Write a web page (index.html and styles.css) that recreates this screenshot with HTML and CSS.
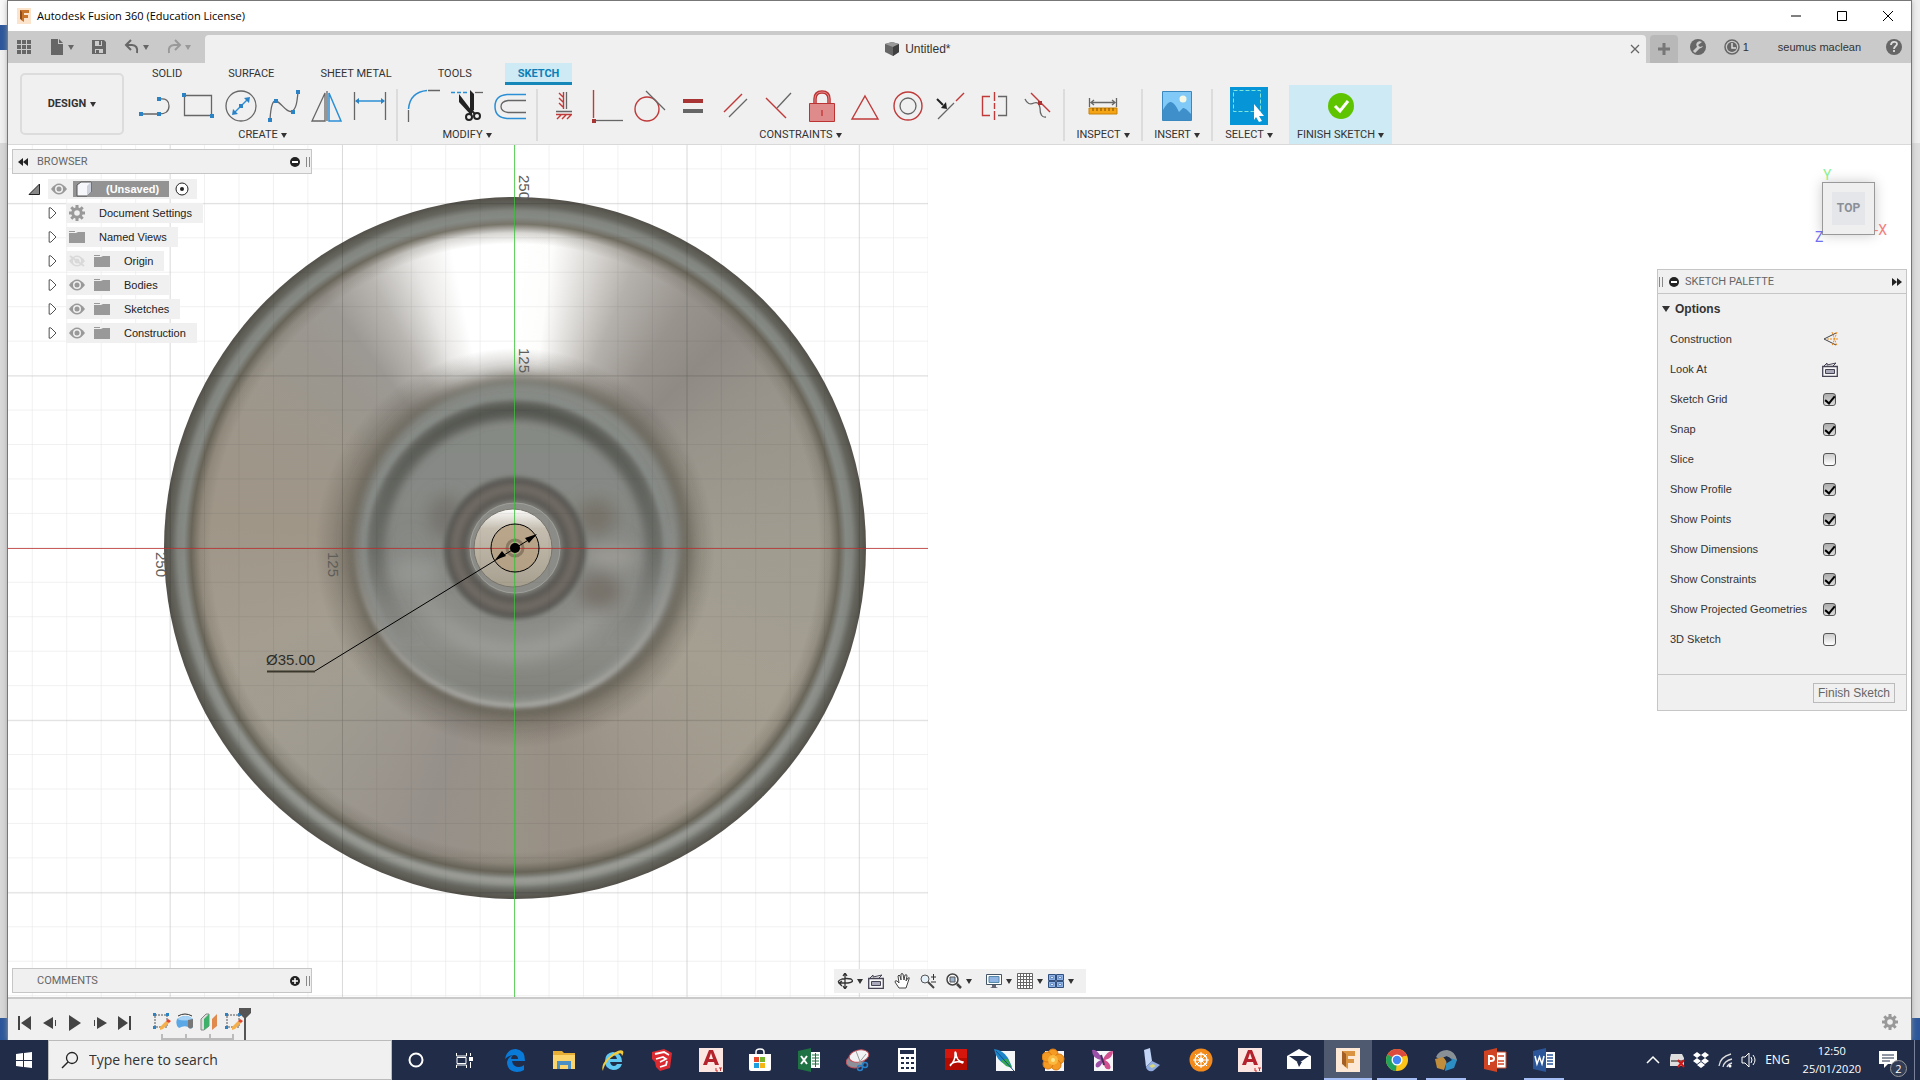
FILE: index.html
```html
<!DOCTYPE html>
<html lang="en">
<head>
<meta charset="utf-8">
<title>Autodesk Fusion 360 (Education License)</title>
<link rel="stylesheet" href="styles.css">
</head>
<body>
<div class="desktop">
<main class="window">
  <header class="titlebar">
    <svg class="app-logo" viewBox="0 0 16 16"><rect x="1" width="14" height="16" fill="#fbe3cc"/><path d="M4 2h9v3H8v2h4v3H8v4l-3-2z" fill="#c8752a"/><path d="M4 2l2 2v8l-2-1z" fill="#8f4d1b"/></svg>
    <h1>Autodesk Fusion 360 (Education License)</h1>
    <div class="win-buttons">
      <button aria-label="Minimise"><svg viewBox="0 0 12 12"><path d="M1 6h10" stroke="#000"/></svg></button>
      <button aria-label="Maximise"><svg viewBox="0 0 12 12"><path d="M1.500 1.500h9v9h-9z" stroke="#000" fill="none"/></svg></button>
      <button aria-label="Close"><svg viewBox="0 0 12 12"><path d="M1 1l10 10M11 1L1 11" stroke="#000"/></svg></button>
    </div>
  </header>

  <div class="docbar">
    <div class="quick">
      <button aria-label="Data panel"><svg class="i16" viewBox="0 0 16 16" fill="#666"><path d="M1 1h4v4H1zM6 1h4v4H6zM11 1h4v4h-4zM1 6h4v4H1zM6 6h4v4H6zM11 6h4v4h-4zM1 11h4v4H1zM6 11h4v4H6zM11 11h4v4h-4z"/></svg></button>
      <button class="has-caret" aria-label="File"><svg class="i16" viewBox="0 0 16 16" fill="#666"><path d="M2 0h7v5h5v11H2zM10 0l4 4h-4z"/></svg><i class="caret dim"></i></button>
      <button aria-label="Save"><svg class="i16" viewBox="0 0 16 16"><path d="M1 1h12l2 2v12H1z" fill="#666"/><path d="M4 2h7v5H4zM4 10h8v4H4z" fill="#ccc"/><path d="M8 2h2v4H8zM5 11h3v3H5z" fill="#666"/></svg></button>
      <button class="has-caret" aria-label="Undo"><svg class="i16" viewBox="0 0 16 16" fill="none" stroke="#666" stroke-width="2"><path d="M7 1L2 6l5 5M2 6h6c4 0 6 3 5 8"/></svg><i class="caret dim"></i></button>
      <button class="has-caret" aria-label="Redo"><svg class="i16" viewBox="0 0 16 16" fill="none" stroke="#999" stroke-width="2"><path d="M9 1l5 5-5 5M14 6H8c-4 0-6 3-5 8"/></svg><i class="caret pale"></i></button>
    </div>
    <div class="doc-tab">
      <span class="doc-name"><svg class="i16" viewBox="0 0 16 16"><path d="M1 3l7-2 7 2v8l-6 4-8-4z" fill="#666"/><path d="M1 3l7-2 7 2-6 3z" fill="#999"/><path d="M9 6l6-3v8l-6 4z" fill="#3f3f3f"/></svg>Untitled*</span>
      <button class="tab-close" aria-label="Close tab"><svg viewBox="0 0 10 10"><path d="M1 1l8 8M9 1L1 9" stroke="#666" stroke-width="1.300"/></svg></button>
    </div>
    <button class="new-tab" aria-label="New tab"><svg class="i16" viewBox="0 0 16 16"><path d="M8 2v12M2 8h12" stroke="#777" stroke-width="3"/></svg></button>
    <div class="account">
      <button aria-label="Extensions"><svg class="i16" viewBox="0 0 16 16"><circle cx="8" cy="8" r="8" fill="#666"/><path d="M4 13l5-5" stroke="#ccc" stroke-width="3" fill="none"/><path d="M12 3a3.500 3.500 0 1 0 1 4l-3 1-2-2z" fill="#ccc"/></svg></button>
      <button class="jobs" aria-label="Job status"><svg class="i16" viewBox="0 0 16 16"><circle cx="8" cy="8" r="7" fill="none" stroke="#666" stroke-width="1.500"/><circle cx="8" cy="8" r="5" fill="#666"/><path d="M8 4v5h4" stroke="#ddd" stroke-width="1.500" fill="none"/></svg>1</button>
      <button class="user">seumus maclean</button>
      <button aria-label="Help"><svg class="i16" viewBox="0 0 16 16"><circle cx="8" cy="8" r="8" fill="#666"/><path d="M5 6c0-4 6-4 6-1 0 2-3 2-3 5M8 11v2" stroke="#ddd" stroke-width="1.800" fill="none"/></svg></button>
    </div>
  </div>

  <div class="ribbon">
    <button class="design">DESIGN<i class="caret"></i></button>
    <div class="ribbon-main">
      <nav class="tabs">
        <a href="#solid">SOLID</a><a href="#surface">SURFACE</a><a href="#sheet">SHEET METAL</a><a href="#tools">TOOLS</a><a href="#sketch" class="active">SKETCH</a>
      </nav>
      <div class="groups">
        <section class="group">
          <div class="tools">
            <button aria-label="Line"><svg viewBox="0 0 32 32"><path d="M2 24h18M20 24q10 0 10-8t-9-7" class="g"/><path class="bf" d="M0 22h4v4H0zM18 22h4v4h-4zM18 7h4v4h-4z"/></svg></button>
            <button aria-label="Rectangle"><svg viewBox="0 0 32 32"><path d="M2.500 5.500h27v20h-27z" class="g"/><path class="bf" d="M0 3h4v4H0zM28 24h4v4h-4z"/></svg></button>
            <button aria-label="Circle"><svg viewBox="0 0 32 32"><circle cx="16" cy="16" r="15" class="g"/><path d="M9 23L23 9" class="b"/><path class="bf" d="M7 25l1-6 5 5zM25 7l-6 1 5 5zM14 14h4v4h-4z"/></svg></button>
            <button aria-label="Spline"><svg viewBox="0 0 32 32"><path d="M2 29C3 15 5 10 8 11c5 1 11 13 16 10 4-2 5-8 6-19" class="g"/><path class="bf" d="M0 28h4v4H0zM6 9h4v4H6zM23 20h4v4h-4zM28 0h4v4h-4z"/></svg></button>
            <button aria-label="Mirror"><svg viewBox="0 0 32 32"><path d="M14 3v28H1zM16 1v30" class="g"/><path d="M18 3v28h12z" class="b"/></svg></button>
            <button aria-label="Dimension"><svg viewBox="0 0 32 32"><path d="M.5 2v28M31.500 2v28" class="g"/><path d="M2 11h28" class="b"/><path class="bf" d="M1 11l4-3v6zM31 11l-4-3v6z"/></svg></button>
          </div>
          <button class="menu">CREATE<i class="caret"></i></button>
        </section>
        <i class="sep"></i>
        <section class="group">
          <div class="tools">
            <button aria-label="Fillet"><svg viewBox="0 0 32 32"><path d="M.5 20v12M20 .5h12" class="g"/><path d="M.5 19Q2 2 19 .5" class="b"/></svg></button>
            <button aria-label="Trim"><svg viewBox="0 0 32 32"><path d="M0 2.500h18" class="b" stroke-dasharray="4 2"/><path d="M24 2.500h8" class="g"/><path d="M8 4l13 17v3h-2L8 12zM19 0l4 4v16l-3 2-1-4z" fill="#222"/><circle cx="18" cy="27" r="3" fill="none" stroke="#222" stroke-width="2"/><circle cx="26" cy="26" r="3" fill="none" stroke="#222" stroke-width="2"/><path d="M20 20l4 4M21 20l-2 5" stroke="#222" stroke-width="2"/></svg></button>
            <button aria-label="Offset"><svg viewBox="0 0 32 32"><path d="M32 4.500H13q-12 1-12 12t12 12h19" class="b" stroke-width="2"/><path d="M32 10.500H14q-7 1-7 6t7 6h18" class="g"/></svg></button>
          </div>
          <button class="menu">MODIFY<i class="caret"></i></button>
        </section>
        <i class="sep"></i>
        <section class="group">
          <div class="tools">
            <button aria-label="Horizontal/Vertical"><svg viewBox="0 0 32 32"><path d="M15.500 2v17M11 3l4 4M11 8l4 4M11 13l4 4M8 24.500h16M9 29l4-4M14 29l4-4M19 29l4-4" class="r"/><path d="M18.500 2v17M8 21.500h16" class="g"/></svg></button>
            <button aria-label="Coincident"><svg viewBox="0 0 32 32"><path d="M2.500 0v28" class="r"/><path d="M5 30.500h27" class="g"/><path class="rf" d="M1 29h4v4H1z"/></svg></button>
            <button aria-label="Tangent"><svg viewBox="0 0 32 32"><circle cx="13" cy="19" r="12" class="r"/><path d="M12 1l19 19" class="g"/></svg></button>
            <button aria-label="Equal"><svg viewBox="0 0 32 32"><path class="rf" d="M6 9h20v4H6z"/><path d="M6 19h20v4H6z" fill="#666"/></svg></button>
            <button aria-label="Parallel"><svg viewBox="0 0 32 32"><path d="M4 22L22 4" class="r"/><path d="M9 27L27 9" class="g"/></svg></button>
            <button aria-label="Perpendicular"><svg viewBox="0 0 32 32"><path d="M3 8l20 20" class="r"/><path d="M14 18L28 3" class="g"/></svg></button>
            <button aria-label="Fix"><svg viewBox="0 0 32 32"><path d="M9 14V9q0-7 7-7t7 7v5" stroke="#b33" stroke-width="3.500" fill="none"/><path d="M9 14V9q0-7 7-7t7 7v5" stroke="#e58c8c" fill="none"/><path d="M3.500 13.500h25v18h-25z" fill="#e08b8b" stroke="#b33"/><path d="M16 20v6" class="r"/></svg></button>
            <button aria-label="Midpoint"><svg viewBox="0 0 32 32"><path d="M16 6l13 23H3z" class="r"/></svg></button>
            <button aria-label="Concentric"><svg viewBox="0 0 32 32"><circle cx="16" cy="16" r="14" class="r"/><circle cx="16" cy="16" r="8" class="g"/></svg></button>
            <button aria-label="Collinear"><svg viewBox="0 0 32 32"><path d="M3 29l16-16" class="g"/><path d="M21 11l8-8" class="r"/><path d="M2 9l6 6" stroke="#222" stroke-width="2"/><path d="M12 19l-6-1 5-6z" fill="#222"/></svg></button>
            <button aria-label="Symmetry"><svg viewBox="0 0 32 32"><path d="M12 6.500H4.500v19H12M16.500 2v9M16.500 13v6M16.500 21v9" class="r"/><path d="M20 6.500h8.500v19H20" class="g"/></svg></button>
            <button aria-label="Curvature"><svg viewBox="0 0 32 32"><path d="M4 9q3 7 9 4 5-2 6 5 0 10 6 9" class="g"/><path d="M10 3l19 19" class="r"/><path class="rf" d="M17 11h4v4h-4z"/></svg></button>
          </div>
          <button class="menu">CONSTRAINTS<i class="caret"></i></button>
        </section>
        <i class="sep"></i>
        <section class="group w76">
          <div class="tools"><button aria-label="Measure"><svg viewBox="0 0 32 32"><path d="M2.500 8v9M29.500 8v9M4 12.500h24M7 10l-3 2.500L7 15M25 10l3 2.500-3 2.500" class="g"/><path d="M2 18h28v6H2z" fill="#f5a414" stroke="#c7810a"/><path d="M6 18v3M10 18v3M14 18v3M18 18v3M22 18v3M26 18v3" stroke="#7a4d00"/></svg></button></div>
          <button class="menu">INSPECT<i class="caret"></i></button>
        </section>
        <i class="sep"></i>
        <section class="group w68">
          <div class="tools"><button aria-label="Insert image"><svg viewBox="0 0 32 32"><path d="M1.500 1.500h29v29h-29z" fill="#81c9f7" stroke="#3a88bd"/><path d="M2 20q5-9 8-8 4 1 8 10l4-4q2-1 8 6v6H2z" fill="#3f8fca"/><circle cx="22" cy="9" r="3.500" fill="#f4f8e4"/></svg></button></div>
          <button class="menu">INSERT<i class="caret"></i></button>
        </section>
        <i class="sep"></i>
        <section class="group w72">
          <div class="tools big"><button aria-label="Select"><svg viewBox="0 0 38 38"><path d="M0 0h38v38H0z" fill="#0696d7"/><path d="M3.500 3.500h27v21h-27z" fill="none" stroke="#7fe6d8" stroke-dasharray="4 2"/><path d="M24 17l10 12h-5l3 5-3 1-3-5-2 3z" fill="#fff"/></svg></button></div>
          <button class="menu">SELECT<i class="caret"></i></button>
        </section>
        <section class="group finish">
          <div class="tools"><button aria-label="Finish sketch"><svg viewBox="0 0 32 32"><circle cx="16" cy="16" r="13" fill="#5fc400"/><path d="M10 16l5 5 8-10" fill="none" stroke="#fff" stroke-width="3"/></svg></button></div>
          <button class="menu">FINISH SKETCH<i class="caret"></i></button>
        </section>
      </div>
    </div>
  </div>

  <div class="canvas">
    <div class="model"></div>
    <svg class="scene" viewBox="0 0 920 852">
      <defs>
        <pattern id="minor" x="23.800" y="23.400" width="34.450" height="34.450" patternUnits="userSpaceOnUse"><path d="M0 0h35M0 0v35" stroke="#000" stroke-opacity=".2" fill="none"/></pattern>
        <pattern id="major" x="161.700" y="58.300" width="172.300" height="172.300" patternUnits="userSpaceOnUse"><path d="M0 0h173M0 0v173" stroke="#000" stroke-opacity=".25" fill="none"/></pattern>
        <linearGradient id="cupLight" x1="0" y1="0" x2="0" y2="1"><stop offset=".4" stop-color="#a5a6a2" stop-opacity="0"/><stop offset="1" stop-color="#a8a8a4"/></linearGradient>
        <linearGradient id="cupDark" x1="0" y1="0" x2="0" y2="1"><stop offset="0" stop-color="#555650"/><stop offset=".5" stop-color="#62645f" stop-opacity=".8"/><stop offset=".85" stop-color="#70716c" stop-opacity="0"/></linearGradient>
        <linearGradient id="cupBase" x1="0" y1="0" x2="0" y2="1"><stop offset="0" stop-color="#878b86"/><stop offset=".5" stop-color="#868884"/><stop offset=".8" stop-color="#8d8d89"/><stop offset="1" stop-color="#81817a"/></linearGradient>
        <linearGradient id="hubTone" x1="0" y1="0" x2="0" y2="1"><stop offset="0" stop-color="#fff"/><stop offset=".25" stop-color="#c5beb0"/><stop offset="1" stop-color="#a79f8e"/></linearGradient>
        <linearGradient id="rimTone" x1="0" y1="0" x2="0" y2="1"><stop offset=".5" stop-color="#9b9b96" stop-opacity="0"/><stop offset="1" stop-color="#a0a09a"/></linearGradient>
        <radialGradient id="collar"><stop offset=".6" stop-color="#8a8a84"/><stop offset=".7" stop-color="#585651"/><stop offset=".83" stop-color="#736d66"/><stop offset=".95" stop-color="#565450"/><stop offset="1" stop-color="#7b7d78"/></radialGradient>
        <filter id="soft2" x="-10%" y="-10%" width="120%" height="120%"><feGaussianBlur stdDeviation="2"/></filter>
        <filter id="soft4" x="-10%" y="-10%" width="120%" height="120%"><feGaussianBlur stdDeviation="4"/></filter>
        <filter id="soft9" x="-40%" y="-40%" width="180%" height="180%"><feGaussianBlur stdDeviation="8"/></filter>
      </defs>
      <g fill="none">
        <circle cx="507" cy="403" r="333" stroke="url(#rimTone)" stroke-width="5" filter="url(#soft2)"/>
        <circle cx="512" cy="401" r="168" fill="#656054" filter="url(#soft9)"/>
        <circle cx="511" cy="399" r="162" fill="url(#cupBase)" filter="url(#soft4)"/>
        <circle cx="507" cy="404" r="139" stroke="url(#cupDark)" stroke-width="18" filter="url(#soft4)"/>
        <circle cx="507" cy="403" r="151" stroke="#8f9591" stroke-opacity=".8" stroke-width="3" filter="url(#soft2)"/>
        <circle cx="507" cy="402" r="158" stroke="url(#cupLight)" stroke-width="6" filter="url(#soft2)"/>
        <circle cx="507" cy="403" r="104" stroke="url(#cupLight)" stroke-opacity=".6" stroke-width="18" filter="url(#soft9)"/>
        <g filter="url(#soft9)"><ellipse cx="588" cy="372" rx="20" ry="18" fill="#77736a"/><ellipse cx="592" cy="446" rx="22" ry="18" fill="#77726a"/><ellipse cx="438" cy="372" rx="18" ry="22" fill="#77756f"/><ellipse cx="602" cy="411" rx="28" ry="8" fill="#a09e98"/><ellipse cx="408" cy="428" rx="24" ry="12" fill="#949793"/></g>
        <circle cx="507" cy="403" r="72" fill="url(#collar)" filter="url(#soft2)"/>
        <circle cx="507" cy="403" r="45" fill="#8b8c87" stroke="#9fa09c"/>
        <circle cx="505" cy="403" r="39" fill="url(#hubTone)" stroke="#77756c"/>
        <circle cx="507" cy="403" r="24" fill="#b69d7d" fill-opacity=".75"/>
        <circle cx="507" cy="403" r="8" stroke="#8a7a64" stroke-width="3"/>
      </g>
      <path fill="url(#minor)" d="M0 0h920v852H0z" opacity=".55"/>
      <path fill="url(#major)" d="M0 0h920v852H0z" opacity=".8"/>
      <path d="M506.500 0v852" stroke="#3cc83c" stroke-opacity=".75"/>
      <path d="M0 403.500h920" stroke="#c03030" stroke-opacity=".75"/>
      <g fill="none" stroke="#000"><circle cx="507" cy="403" r="24"/><path d="M527 391L307 526"/><path d="M307 526.500h-48" stroke="#3a382c" stroke-width="2"/></g>
      <path d="M529 389l-12 4 4 5zM487 415l11-4-4-5z"/>
      <circle cx="507" cy="403" r="5"/>
      <g class="dim-text"><text x="258" y="520">Ø35.00</text></g>
      <g class="axis-text">
        <text transform="translate(511 30) rotate(90)">250</text>
        <text transform="translate(511 203) rotate(90)">125</text>
        <text transform="translate(320 407) rotate(90)">125</text>
        <text transform="translate(148 407) rotate(90)">250</text>
      </g>
    </svg>

    <div class="overlay">
      <div class="left-col">
        <section class="browser">
          <header class="panel-head"><svg class="i12" viewBox="0 0 12 12"><path d="M6 2v8L1 6zM11 2v8L6 6z" fill="#222"/></svg><h2>BROWSER</h2><svg class="i12 end" viewBox="0 0 12 12"><circle cx="6" cy="6" r="5" fill="#222"/><path d="M3 6h6" stroke="#fff" stroke-width="2"/></svg><i class="grip"></i></header>
          <ul class="tree">
            <li class="root"><svg class="i12" viewBox="0 0 12 12"><path d="M1 11.500L11.500 1v10.500z" fill="#888" stroke="#222"/></svg><span class="item"><svg class="eye" viewBox="0 0 16 12"><use href="#eye"/></svg><b><svg class="i16" viewBox="0 0 16 16"><path d="M1 4l4-3h10v10l-4 4H1z" fill="#f6f7fa" stroke="#555"/><path d="M11 5l4-4v10l-4 4z" fill="#cdd1dc"/></svg>(Unsaved)</b><svg class="target" viewBox="0 0 14 14"><circle cx="7" cy="7" r="6" fill="#fff" stroke="#222"/><circle cx="7" cy="7" r="2" fill="#222"/></svg></span></li>
            <li><svg class="i12" viewBox="0 0 12 14"><use href="#twist"/></svg><span class="item"><svg class="i16" viewBox="0 0 16 16"><use href="#gear"/></svg><span>Document Settings</span></span></li>
            <li><svg class="i12" viewBox="0 0 12 14"><use href="#twist"/></svg><span class="item"><svg class="i16" viewBox="0 0 16 16"><use href="#folder"/></svg><span>Named Views</span></span></li>
            <li><svg class="i12" viewBox="0 0 12 14"><use href="#twist"/></svg><span class="item"><svg class="eye off" viewBox="0 0 16 12"><use href="#eye"/><path d="M1 1l14 10" stroke="#999" stroke-width="2"/></svg><svg class="i16" viewBox="0 0 16 16"><use href="#folder"/></svg><span>Origin</span></span></li>
            <li><svg class="i12" viewBox="0 0 12 14"><use href="#twist"/></svg><span class="item"><svg class="eye" viewBox="0 0 16 12"><use href="#eye"/></svg><svg class="i16" viewBox="0 0 16 16"><use href="#folder"/></svg><span>Bodies</span></span></li>
            <li><svg class="i12" viewBox="0 0 12 14"><use href="#twist"/></svg><span class="item"><svg class="eye" viewBox="0 0 16 12"><use href="#eye"/></svg><svg class="i16" viewBox="0 0 16 16"><use href="#folder"/></svg><span>Sketches</span></span></li>
            <li><svg class="i12" viewBox="0 0 12 14"><use href="#twist"/></svg><span class="item"><svg class="eye" viewBox="0 0 16 12"><use href="#eye"/></svg><svg class="i16" viewBox="0 0 16 16"><use href="#folder"/></svg><span>Construction</span></span></li>
          </ul>
        </section>
        <header class="panel-head comments"><h2>COMMENTS</h2><svg class="i12 end" viewBox="0 0 12 12"><circle cx="6" cy="6" r="5" fill="#222"/><path d="M3 6h6M6 3v6" stroke="#fff" stroke-width="1.500"/></svg><i class="grip"></i></header>
      </div>

      <nav class="navbar">
        <button aria-label="Orbit"><svg class="i16" viewBox="0 0 16 16"><path d="M8 1v14M6 3l2-3 2 3M6 13l2 3 2-3M3 11q-4-3 2-5 5-1 9 0 4 3-3 4l-8 0M5 8l-3 2 3 3" fill="none" stroke="#333" stroke-width="1.300"/></svg><i class="caret"></i></button>
        <button aria-label="Look at"><svg class="i16" viewBox="0 0 16 16"><use href="#lookat"/></svg></button>
        <button aria-label="Pan"><svg class="i16" viewBox="0 0 16 16"><path d="M5 15L1 9q0-2 2-1l2 2-1-7q1-2 2 0l1 4V1q1-1 2 0l1 6 1-5q2-1 2 1l-1 5 2-3q2-1 1 1l-3 9z" fill="#fff" stroke="#444"/></svg></button>
        <button aria-label="Zoom"><svg class="i16" viewBox="0 0 16 16"><circle cx="5" cy="6" r="4" fill="#e6f2fa" stroke="#555"/><path d="M8 9l6 6" stroke="#444" stroke-width="2"/><path d="M11 4h5M13.500 1v6M11 9h5" stroke="#333"/></svg></button>
        <button aria-label="Fit"><svg class="i16" viewBox="0 0 16 16"><circle cx="6.500" cy="6.500" r="5.500" fill="#fff" stroke="#444" stroke-width="1.500"/><path d="M4 4h5v5H4z" fill="#9db5cf" stroke="#555"/><path d="M11 11l4 4" stroke="#444" stroke-width="2.500"/></svg><i class="caret"></i></button>
        <button class="gap" aria-label="Display settings"><svg class="i16" viewBox="0 0 16 16"><path d="M1 1.500h14.500v10H.5V1.500z" fill="#fff" stroke="#456"/><path d="M3 3.500h10v6H3z" fill="#8fb3e3" stroke="#58a"/><path d="M6 12h4v2l2 1H4l2-1z" fill="#667"/></svg><i class="caret"></i></button>
        <button aria-label="Grid settings"><svg class="i16" viewBox="0 0 16 16"><path d="M.5 .5h15v15H.5zM3.500 0v16M6.500 0v16M9.500 0v16M12.500 0v16M0 3.500h16M0 6.500h16M0 9.500h16M0 12.500h16" fill="#fff" stroke="#666"/></svg><i class="caret"></i></button>
        <button aria-label="Viewports"><svg class="i16" viewBox="0 0 16 16"><path d="M.5 1.500h7v6h-7zM8.500 1.500h7v6h-7zM.5 8.500h7v6h-7zM8.500 8.500h7v6h-7z" fill="#8db2e8" stroke="#334f7d"/><path d="M2.500 3.500h3v2h-3zM10.500 3.500h3v2h-3zM2.500 10.500h3v2h-3zM10.500 10.500h3v2h-3z" fill="#dce9fa" stroke="#6a8fc4"/></svg><i class="caret"></i></button>
      </nav>

      <div class="right-col">
        <div class="cube"><span class="face">TOP</span><span class="ax y">Y</span><span class="ax x">-X</span><span class="ax z">Z</span></div>
        <section class="palette">
          <header class="panel-head"><i class="grip"></i><svg class="i12" viewBox="0 0 12 12"><circle cx="6" cy="6" r="5" fill="#222"/><path d="M3 6h6" stroke="#fff" stroke-width="2"/></svg><h2>SKETCH PALETTE</h2><svg class="i12 end" viewBox="0 0 12 12"><path d="M1 2v8l5-4zM6 2v8l5-4z" fill="#222"/></svg></header>
          <h3><i class="caret wide"></i>Options</h3>
          <div class="options">
            <div class="opt"><span>Construction</span><button aria-label="Construction"><svg class="i16" viewBox="0 0 16 16"><path d="M14 2L2 8l12 6" fill="none" stroke="#444"/><path d="M5 8h11M10 1l5 14M15 1l-5 14" fill="none" stroke="#f08a1c" stroke-dasharray="2 1"/></svg></button></div>
            <div class="opt"><span>Look At</span><button aria-label="Look At"><svg class="i16" viewBox="0 0 16 16"><use href="#lookat"/></svg></button></div>
            <label class="opt"><span>Sketch Grid</span><input type="checkbox" checked></label>
            <label class="opt"><span>Snap</span><input type="checkbox" checked></label>
            <label class="opt"><span>Slice</span><input type="checkbox"></label>
            <label class="opt"><span>Show Profile</span><input type="checkbox" checked></label>
            <label class="opt"><span>Show Points</span><input type="checkbox" checked></label>
            <label class="opt"><span>Show Dimensions</span><input type="checkbox" checked></label>
            <label class="opt"><span>Show Constraints</span><input type="checkbox" checked></label>
            <label class="opt"><span>Show Projected Geometries</span><input type="checkbox" checked></label>
            <label class="opt"><span>3D Sketch</span><input type="checkbox"></label>
          </div>
          <footer><button>Finish Sketch</button></footer>
        </section>
      </div>
    </div>
  </div>

  <footer class="timeline">
    <div class="player">
      <button aria-label="First"><svg viewBox="0 0 14 16"><path d="M0 1h2v14H0zM13 1v14L3 8z"/></svg></button>
      <button aria-label="Back"><svg viewBox="0 0 14 16"><path d="M10 2v12L0 8zM12 5h1v6h-1z"/></svg></button>
      <button aria-label="Play"><svg viewBox="0 0 14 16"><path d="M1 0v16l12-8z"/></svg></button>
      <button aria-label="Forward"><svg viewBox="0 0 14 16"><path d="M4 2v12l10-6zM1 5h1v6H1z"/></svg></button>
      <button aria-label="Last"><svg viewBox="0 0 14 16"><path d="M11 1h2v14h-2zM0 1v14l10-7z"/></svg></button>
    </div>
    <svg class="features" viewBox="0 0 100 32">
      <g id="sk"><path d="M3 7h12v12H3z" fill="none" stroke="#555" stroke-dasharray="2 1"/><path d="M1 5h3v3H1zM14 5h3v3h-3zM1 18h3v3H1z" fill="#2b83c6"/><path d="M8 19l6-6 3 2-6 6-3 1z" fill="#f5b04c"/><path d="M14 13l2-2 3 2-2 2z" fill="#e2472e"/></g>
      <use href="#sk" x="72"/>
      <path d="M25 11q9-6 16 0v8q-2 3-5 0-4-2-9 1-4-3-2-9z" fill="#5aa9e6"/><path d="M25 11q9-6 16 0-8 3-16 0z" fill="#a5d2f5"/><path d="M26 8q7-4 14 0" fill="none" stroke="#333"/><path d="M36 12l5-1v8q-3 3-5 0z" fill="#777"/>
      <path d="M49 11l5-5h3v12l-5 4h-3z" fill="#ddd" stroke="#888"/><path d="M52 11l5-5v12l-5 4z" fill="#3eb06a"/><path d="M60 11l5-5v12l-5 4z" fill="#e08a4e"/>
      <path d="M10 26v5h71v-5M34 26v5M58 26v5" fill="none" stroke="#bbb" stroke-width="2"/>
      <path d="M87 0h12v5l-5 5v22h-2V10l-5-5z" fill="#555"/>
    </svg>
    <button class="settings" aria-label="Settings"><svg class="i16" viewBox="0 0 16 16"><use href="#gear"/></svg></button>
  </footer>
</main>
</div>

<footer class="taskbar">
  <button class="start" aria-label="Start"><svg class="i16" viewBox="0 0 16 16"><path d="M0 2l7-1v7H0zM8 1l8-1v8H8zM0 9h7v6l-7-1zM8 9h8v7l-8-1z" fill="#fff"/></svg></button>
  <label class="search"><svg viewBox="0 0 18 18"><circle cx="11" cy="7" r="5.500" fill="none" stroke="#222" stroke-width="1.300"/><path d="M7 11l-6 6" stroke="#222" stroke-width="1.500"/></svg><input type="search" placeholder="Type here to search" aria-label="Type here to search"></label>
  <div class="system">
    <button aria-label="Cortana"><svg viewBox="0 0 24 24"><circle cx="12" cy="12" r="6.500" fill="none" stroke="#fff" stroke-width="2"/></svg></button>
    <button aria-label="Task view"><svg viewBox="0 0 24 24" fill="none" stroke="#fff"><path d="M4.500 5v3h10V5M5 9.500h9v6H5zM4.500 20v-3h10v3M18.500 5v3M18.500 14v6"/><path d="M17 9h4v4h-4z" fill="#fff" stroke="none"/></svg></button>
  </div>
  <div class="apps">
    <button aria-label="Edge"><svg viewBox="0 0 24 24"><path d="M2 11Q4 1 13 1q9 1 9 12H9q1 6 7 6 3 0 5-2v5q-3 2-7 2-10-1-10-10 1-5 6-7-2 2-2 4h7q0-4-4-4-5 0-9 4z" fill="#0a7ad8"/></svg></button>
    <button aria-label="File Explorer"><svg viewBox="0 0 24 24"><path d="M1 3h9l2 2h11v16H1z" fill="#e6ae35"/><path d="M1 7h22v14H1z" fill="#fbd46b"/><path d="M5 21v-8h14v8h-3v-4H8v4z" fill="#4a90c4"/></svg></button>
    <button aria-label="Internet Explorer"><svg viewBox="0 0 24 24"><path d="M12 4q9 1 9 10H9q1 4 4 4 2 0 3-2h5q-2 6-9 6-8-1-8-9t8-9M9 11h7q-1-4-4-4-2 0-3 4" fill="#5fc8f3" fill-rule="evenodd"/><path d="M2 23Q-1 17 8 9 18 0 22 3q1 2-1 5 0-4-4-2Q8 9 4 17q-2 4-2 6z" fill="#f2ca3d"/></svg></button>
    <button aria-label="SketchUp"><svg viewBox="0 0 24 24"><path d="M2 4l12-3 8 4-2 15-10 3-4-4-1-5-3-3z" fill="#db2b31"/><path d="M5 6l9-2 5 3M6 11l7-2 3 2-6 3M10 19l6-2 1-4" stroke="#fff" stroke-width="1.800" fill="none"/></svg></button>
    <button aria-label="AutoCAD"><svg viewBox="0 0 24 24"><use href="#acad"/></svg></button>
    <button aria-label="Microsoft Store"><svg viewBox="0 0 24 24"><path d="M1 6h22v15q0 2-2 2H3q-2 0-2-2z" fill="#fff"/><path d="M8 7V4q0-3 4-3t4 3v3" fill="none" stroke="#fff" stroke-width="1.500"/><path d="M6 9h5v5H6z" fill="#e8482c"/><path d="M12 9h5v5h-5z" fill="#73b52b"/><path d="M6 15h5v5H6z" fill="#1e9fe0"/><path d="M12 15h5v5h-5z" fill="#f6b516"/></svg></button>
    <button aria-label="Excel"><svg viewBox="0 0 24 24"><path d="M13 4h10v16H13z" fill="#fff"/><path d="M15 7h7M15 10h7M15 13h7M15 16h7M18.500 5v14" stroke="#1f7244"/><path d="M1 3l13-3v24L1 21z" fill="#1f7244"/><path d="M4 8l6 8M10 8l-6 8" stroke="#fff" stroke-width="2"/></svg></button>
    <button aria-label="Snipping Tool"><svg viewBox="0 0 24 24"><ellipse cx="9" cy="14" rx="9" ry="6" fill="#8d8f99" stroke="#c84c54"/><ellipse cx="13" cy="8" rx="10" ry="6" transform="rotate(-12 13 8)" fill="#f2f2f4" stroke="#c84c54"/><path d="M10 3l5 13M20 6l-8 10" stroke="#999"/><circle cx="14" cy="20" r="2.500" fill="none" stroke="#2882c8" stroke-width="1.500"/><circle cx="19" cy="17" r="2.500" fill="none" stroke="#2882c8" stroke-width="1.500"/></svg></button>
    <button aria-label="Calculator"><svg viewBox="0 0 24 24"><path d="M3 0h18v24H3z" fill="#fff"/><path d="M5 2h14v4H5zM6 9h3v2H6zM11 9h3v2h-3zM16 9h3v2h-3zM6 14h3v2H6zM11 14h3v2h-3zM16 14h3v2h-3zM6 19h3v2H6zM11 19h3v2h-3zM16 19h3v2h-3z" fill="#222d4b"/></svg></button>
    <button aria-label="Acrobat"><svg viewBox="0 0 24 24"><path d="M1 1h22v21H1z" fill="#b30b00"/><path d="M1 1h22v9H1z" fill="#d5160c"/><path d="M6 18Q12 12 11 5q0-2 1 0 0 8 7 9 0 2-3 0-6-1-10 3" fill="none" stroke="#fff" stroke-width="1.500"/></svg></button>
    <button aria-label="Paint tool"><svg viewBox="0 0 24 24"><path d="M3 3h19v20H3z" fill="#f5f6f8"/><path d="M1 1q9 1 14 9l4 9-6-2Q3 12 1 1z" fill="#1d85c9"/><path d="M8 13q3-3 7-2l4 9-6-2z" fill="#36a853"/><path d="M3 3l18 20" stroke="#124f88"/></svg></button>
    <button aria-label="Photo tool"><svg viewBox="0 0 24 24"><path d="M3 3h19v20H3z" fill="#f5f6f8"/><g fill="#f59a23" stroke="#d97a12"><circle cx="11" cy="6" r="5"/><circle cx="17" cy="11" r="5"/><circle cx="14" cy="17" r="5"/><circle cx="6" cy="16" r="5"/><circle cx="5" cy="9" r="5"/></g><circle cx="11" cy="12" r="5" fill="#fbb83f"/><circle cx="11" cy="12" r="2" fill="#fbe68b"/></svg></button>
    <button aria-label="Publishing tool"><svg viewBox="0 0 24 24"><path d="M3 3h19v20H3z" fill="#f5f6f8"/><path d="M11 10Q5 0 1 2q0 8 9 10-7 3-5 7 4 2 7-6z" fill="#9b4fa8"/><path d="M12 11q5-9 10-8 0 7-8 9 7 4 5 9-5 2-7-7z" fill="#d24f8f"/><path d="M10 7l3 10" stroke="#472c5e" stroke-width="2"/></svg></button>
    <button aria-label="Scanner"><svg viewBox="0 0 24 24"><path d="M4 2l6-2 2 13-6 6z" fill="#c3d5f6"/><path d="M6 19l6-6 8 4-7 6q-6 1-7-4z" fill="#91ace0"/><path d="M9 18l4-2 3 2-4 2z" fill="#d6d77f"/></svg></button>
    <button aria-label="Helm"><svg viewBox="0 0 24 24"><circle cx="12" cy="12" r="11.500" fill="#f28a1c"/><circle cx="12" cy="12" r="6" fill="none" stroke="#fff" stroke-width="1.500"/><circle cx="12" cy="12" r="2.500" fill="#fff"/><path d="M12 4v16M4 12h16M6 6l12 12M18 6L6 18" stroke="#fff"/></svg></button>
    <button aria-label="AutoCAD LT"><svg viewBox="0 0 24 24"><use href="#acad"/></svg></button>
    <button aria-label="Mail"><svg viewBox="0 0 24 24"><path d="M0 8l12-7 12 7v13H0z" fill="#fff"/><path d="M2 8h20l-10 7z" fill="#222d4b"/><path d="M10 14l5 0-3 5z" fill="#222d4b"/></svg></button>
    <button class="on current" aria-label="Fusion 360"><svg viewBox="0 0 24 24"><path d="M0 0h24v24H0z" fill="#fce8d4"/><path d="M6 3h13v5h-7v3h6v4h-6v6l-4-3z" fill="#d99341"/><path d="M6 3l4 3v13l-4-3z" fill="#a55f24"/></svg></button>
    <button class="on" aria-label="Chrome"><svg viewBox="0 0 24 24"><circle cx="12" cy="12" r="11" fill="#fbc417"/><path d="M12 12L2.500 6.500a11 11 0 0 1 19 0z" fill="#dd4b3e"/><path d="M12 12L2.500 6.500A11 11 0 0 0 11 23z" fill="#21a35e"/><path d="M12 7h9.600" stroke="#dd4b3e" stroke-width="2"/><circle cx="12" cy="12" r="5.500" fill="#fff"/><circle cx="12" cy="12" r="4.200" fill="#4285f4"/></svg></button>
    <button class="on" aria-label="Slicer"><svg viewBox="0 0 24 24"><path d="M2 9q3-7 11-7 8 1 10 10l-4 2-6-6-8 3z" fill="#8a9196"/><path d="M1 11l8-2 4 4-3 9-7-2z" fill="#c08d3c"/><path d="M16 10l7 2-3 8-9 3 1-7z" fill="#2d8ec4"/><path d="M10 9l5 0 3 3-5 3z" fill="#1b2b45"/></svg></button>
    <button aria-label="PowerPoint"><svg viewBox="0 0 24 24"><path d="M13 4h10v16H13z" fill="#fff" stroke="#d04423"/><path d="M15 13h6M15 16h6M15 8h6" stroke="#d04423" stroke-width="1.500"/><path d="M1 3l13-3v24L1 21z" fill="#d04423"/><path d="M6 17V8h2q3 0 3 2.500T8 13H6" stroke="#fff" stroke-width="2" fill="none"/></svg></button>
    <button class="on" aria-label="Word"><svg viewBox="0 0 24 24"><path d="M13 4h10v16H13z" fill="#fff"/><path d="M15 7h6M15 10h6M15 13h6M15 16h6" stroke="#2a5699" stroke-width="1.500"/><path d="M1 3l13-3v24L1 21z" fill="#2a5699"/><path d="M3 8l2 8 2.500-7 2.500 7 2-8" stroke="#fff" stroke-width="1.500" fill="none"/></svg></button>
  </div>
  <div class="tray">
    <svg class="i16" viewBox="0 0 16 16"><path d="M2 11l6-6 6 6" fill="none" stroke="#fff" stroke-width="1.500"/></svg>
    <svg class="i16" viewBox="0 0 16 16"><path d="M2 2h11l2 4v8H1V6z" fill="#ddd"/><path d="M2 9h12" stroke="#777" stroke-width="2"/><path d="M9 8l6 7M15 8l-6 7" stroke="#d01717" stroke-width="2"/></svg>
    <svg class="i16" viewBox="0 0 16 16"><path d="M4 0l4 3-4 3-4-3zM12 0l4 3-4 3-4-3zM4 6l4 3-4 3-4-3zM12 6l4 3-4 3-4-3zM8 10l4 3-4 3-4-3z" fill="#fff"/></svg>
    <svg class="i16" viewBox="0 0 16 16"><path d="M2 14Q3 5 14 2M6 15q1-6 9-8M10 15q1-3 5-4" fill="none" stroke="#ddd" stroke-width="1.300"/><circle cx="13" cy="14" r="1.500" fill="#fff"/></svg>
    <svg class="i16" viewBox="0 0 16 16"><path d="M1 5h3l4-4v14l-4-4H1zM10 5q2 3 0 6M12 3q4 5 0 10" fill="none" stroke="#fff"/></svg>
    <span class="lang">ENG</span>
    <time class="clock"><span>12:50</span><span>25/01/2020</span></time>
    <button class="notes" aria-label="Notifications"><svg viewBox="0 0 20 20"><path d="M0 1h18v13H9l-4 4v-4H0z" fill="#fff"/><path d="M3 5h12M3 8h12M3 11h8" stroke="#222d4b"/></svg><span class="badge">2</span></button>
  </div>
</footer>

<svg class="defs" aria-hidden="true">
  <symbol id="eye" viewBox="0 0 16 12"><path d="M0 6Q8-5 16 6 8 17 0 6z" fill="#999"/><circle cx="8" cy="6" r="4" fill="#f0f0f0"/><circle cx="8" cy="6" r="2.500" fill="#999"/></symbol>
  <symbol id="folder" viewBox="0 0 16 16"><path d="M0 2h6v1H0zM0 4h7l2-1h7v11H0z" fill="#999"/></symbol>
  <symbol id="gear" viewBox="0 0 16 16"><circle cx="8" cy="8" r="4.300" fill="none" stroke="#999" stroke-width="3"/><path d="M8 0v3M8 13v3M0 8h3M13 8h3M2.300 2.300l2.200 2.200M11.500 11.500l2.200 2.200M2.300 13.700l2.200-2.200M11.500 4.500l2.200-2.200" stroke="#999" stroke-width="3"/></symbol>
  <symbol id="twist" viewBox="0 0 12 14"><path d="M1.500 1v12h2l6-6-6-6z" fill="#fff" stroke="#333"/></symbol>
  <symbol id="lookat" viewBox="0 0 16 16"><path d="M.7 5.500h14.600v10H.7z" fill="#f8f8f8" stroke="#445" stroke-width="1.300"/><path d="M3.500 8.500h9v4h-9z" fill="#aab" stroke="#445"/><path d="M2 5l3-3v2l9-2-3 3" fill="none" stroke="#445"/></symbol>
  <symbol id="acad" viewBox="0 0 24 24"><path d="M0 0h24v24H0z" fill="#fbe6e2"/><path d="M4 17L10 2h4l6 15h-4l-1-3H9l-1 3zM10 11h4l-2-6z" fill="#b4222c" fill-rule="evenodd"/><path d="M17 20v3h2M20 20h3M21.500 20v3" stroke="#c33" fill="none"/></symbol>
</svg>
</body>
</html>
```
FILE: styles.css
```css
* { box-sizing: border-box; }
body {
  margin: 0;
  min-height: 100vh;
  display: flex;
  flex-direction: column;
  font: 11px/16px "Liberation Sans", Arial, sans-serif;
  color: #333;
  overflow: hidden;
}
button { font: inherit; color: inherit; background: none; border: 0; padding: 0; display: flex; align-items: center; }
h1, h2, h3, ul { margin: 0; padding: 0; font: inherit; list-style: none; }
a { color: inherit; text-decoration: none; }
svg { display: block; flex: none; }
.defs { display: none; }
.i12 { width: 12px; height: 12px; }
.i16 { width: 16px; height: 16px; }
.caret { width: 0; height: 0; border: 3px solid transparent; border-top: 5px solid #333; border-bottom: 0; margin-left: 3px; flex: none; }
.caret.dim { border-top-color: #666; }
.caret.pale { border-top-color: #999; }
.caret.wide { border-width: 6px 4px 0; margin: 0 5px 0 0; }

/* Desktop and window frame */
.desktop {
  flex: 1;
  display: flex;
  padding: 1px 9px 0 8px;
  background:
    linear-gradient(#f8f8f8 25px, #2b579a 25px 50px, #f0f0f0 50px 143px, #d8d8d8 143px calc(100% - 22px), #2b579a calc(100% - 22px)) left / 8px 100% no-repeat,
    linear-gradient(#efefef 143px, #dedede 143px calc(100% - 22px), #2b579a calc(100% - 22px)) right / 9px 100% no-repeat,
    #777;
}
.window { flex: 1; min-width: 0; display: flex; flex-direction: column; background: #f0f0f0; box-shadow: 0 0 0 1px #777, 0 0 6px #999; }
.titlebar { height: 30px; background: #fff; display: flex; align-items: center; padding-left: 8px; color: #000; font: 11px/16px "Open Sans", "Noto Sans", sans-serif; }
.titlebar h1 { margin-left: 5px; flex: 1; padding-bottom: 1px; }
.app-logo { width: 16px; height: 16px; }
.win-buttons { display: flex; }
.win-buttons button { width: 46px; height: 29px; justify-content: center; }
.win-buttons svg { width: 12px; height: 12px; }

/* Document bar */
.docbar { height: 32px; background: #cacaca; display: flex; align-items: flex-end; }
.quick { width: 197px; height: 32px; display: flex; align-items: center; padding-left: 8px; gap: 17px; }
.doc-tab { flex: 1; height: 28px; background: #f0f0f0; border-radius: 4px 4px 0 0; display: flex; align-items: center; }
.doc-name { flex: 1; display: flex; justify-content: center; align-items: center; gap: 5px; font-size: 12px; }
.tab-close { margin-right: 6px; }
.tab-close svg { width: 10px; height: 10px; }
.new-tab { width: 28px; height: 28px; margin-left: 4px; background: #b8b8b8; border-radius: 4px 4px 0 0; justify-content: center; }
.account { height: 32px; padding: 0 9px 0 12px; display: flex; align-items: center; gap: 18px; }
.account .jobs { gap: 3px; }
.account .user { margin: 0 7px 0 11px; }

/* Ribbon */
.ribbon { display: flex; background: #f0f0f0; border-bottom: 1px solid #d9d9d9; font: 11px/14px Roboto, "Liberation Sans", sans-serif; }
.design { width: 104px; height: 62px; margin: 10px 5px 9px 12px; border: 2px solid #dcdcdc; border-radius: 5px; justify-content: center; font-weight: bold; gap: 1px; }
.ribbon-main { flex: 1; min-width: 0; }
.tabs { display: flex; height: 22px; }
.tabs a { padding: 4px 13px 0; margin-left: 20px; border-bottom: 3px solid transparent; }
.tabs a:first-child { margin-left: 10px; }
.tabs .active { color: #0a7fb8; background: #cdeaf5; border-color: #1587b8; font-weight: bold; }
.groups { display: flex; height: 59px; }
.group { display: flex; flex-direction: column; align-items: center; padding: 5px 10px 0; }
.tools { display: flex; gap: 11px; height: 32px; }
.tools svg { width: 32px; height: 32px; overflow: visible; }
.tools.big { align-items: center; }
.tools.big svg { width: 38px; height: 38px; }
.menu { height: 14px; margin-top: 6px; white-space: nowrap; }
.sep { width: 2px; height: 52px; margin-top: 4px; background: #dcdcdc; flex: none; }
.w76 { width: 76px; }
.w68 { width: 68px; }
.w72 { width: 72px; margin-right: 4px; }
.finish { width: 103px; background: #cdeaf5; }
.g { fill: none; stroke: #666; stroke-width: 1.3; }
.b { fill: none; stroke: #2b8fd6; stroke-width: 1.5; }
.r { fill: none; stroke: #c03a3a; stroke-width: 1.4; }
.bf { fill: #2b83c6; }
.rf { fill: #a93434; }

/* Drawing canvas: the model sits on a free plane */
.canvas { flex: 1; position: relative; background: #fff; overflow: hidden; border-bottom: 2px solid #cacaca; }
.model {
  position: absolute; left: 156px; top: 52px; width: 702px; height: 702px; border-radius: 50%;
  background:
    radial-gradient(closest-side, transparent 304px, rgba(100, 95, 82, .25) 315px, rgba(96, 92, 80, .85) 324px, #868a85 331px, #82857f 337px, #65655e 343px, #55534c 350px),
    radial-gradient(closest-side, rgba(90, 85, 75, .5) 165px, transparent 200px),
    conic-gradient(#fff 0deg, #fdfdfc 7deg, #dedcd9 14deg, #b4b0ab 23deg, #98938d 35deg, #8f8a84 45deg, #99948b 60deg, #a09c90 90deg, #a59f92 120deg, #9f978b 150deg, #988f85 168deg, #999287 180deg, #96908a 198deg, #a09b91 225deg, #a49d90 250deg, #9f9688 275deg, #9e968a 295deg, #9b978f 312deg, #9c9893 323deg, #b9b6b2 332deg, #e8e7e5 341deg, #fff 348deg);
}
.scene { position: absolute; left: 0; top: 0; width: 920px; height: 852px; }
.dim-text { font-size: 15px; fill: #2f2d28; }
.axis-text { font-size: 15px; fill: #5e5e5a; }

/* Panels over the canvas */
.overlay { position: absolute; inset: 0; display: grid; grid-template-columns: 1fr auto 1fr; padding: 4px; }
.left-col { display: flex; flex-direction: column; justify-content: space-between; align-items: flex-start; }
.panel-head { width: 300px; height: 25px; display: flex; align-items: center; padding: 0 1px 0 4px; background: #f0f0f0; border: 1px solid #c6c6c6; color: #666; font: 11px/16px Roboto, "Liberation Sans", sans-serif; }
.panel-head h2 { margin-left: 8px; }
.panel-head .end { margin-left: auto; margin-right: 5px; }
.grip { width: 4px; height: 10px; border: solid #888; border-width: 0 1px; }
.comments h2 { margin-left: 20px; }
.tree li { display: flex; align-items: center; height: 24px; padding-left: 35px; gap: 7px; color: #222; }
.tree .root { height: 27px; padding: 3px 0 0 16px; gap: 8px; }
.item { display: flex; align-items: center; height: 20px; background: #f0f0f0; padding: 0 11px 0 3px; gap: 9px; }
.item > span { margin-left: 5px; }
.eye { width: 16px; height: 12px; }
.eye.off { opacity: .25; }
.root .item { gap: 6px; padding-right: 8px; }
.root b { display: flex; align-items: center; gap: 14px; height: 16px; background: #939393; color: #fff; padding: 0 10px 0 3px; }
.target { width: 14px; height: 14px; }
.navbar { align-self: end; display: flex; align-items: center; height: 24px; padding: 0 12px 0 3px; background: #f0f0f0; }
.navbar button { margin-right: 10px; }
.navbar button:has(.caret) { margin-right: 5px; }
.navbar button.gap { margin-left: 9px; }
.navbar .caret { margin-left: 4px; }
.navbar button:last-child { margin-right: 0; }
.right-col { display: flex; flex-direction: column; align-items: flex-end; }
.cube { position: relative; width: 53px; height: 53px; margin: 33px 32px 34px 0; border: 1px solid #999; background: #efefef; box-shadow: 0 0 12px #ccc; display: grid; place-items: center; }
.face { width: 33px; height: 33px; background: #e4e6ea; color: #8b8f96; font: bold 12px/33px Roboto, "Liberation Sans", sans-serif; text-align: center; }
.ax { position: absolute; font: 14px/14px Roboto, "Liberation Sans", sans-serif; }
.ax.y { left: 0; top: -15px; color: #8df08d; }
.ax.x { right: -13px; bottom: -3px; color: #f47c7c; }
.ax.z { left: -8px; bottom: -10px; color: #6f6ff0; }
.palette { width: 250px; background: #f0f0f0; border: 1px solid #c6c6c6; }
.palette .panel-head { width: auto; height: 24px; border-width: 0 0 1px; padding: 0 0 0 1px; gap: 5px; }
.palette .panel-head h2 { margin-left: 0; }
.palette .panel-head .end { margin-right: 3px; }
.palette h3 { display: flex; align-items: center; height: 30px; padding-left: 4px; font-weight: bold; font-size: 12px; }
.options { padding: 0 68px 20px 12px; }
.opt { display: flex; align-items: center; justify-content: space-between; height: 30px; }
.opt input { appearance: none; width: 13px; height: 13px; margin: 0 2px 0 0; border: 1px solid #555; border-radius: 3px; background: linear-gradient(#ccc, #fff); display: grid; place-items: center; }
.opt input:checked { background: linear-gradient(#aaa, #ddd); }
.opt input:checked::after { content: ""; width: 4px; height: 8px; margin-bottom: 2px; border: solid #000; border-width: 0 2px 2px 0; transform: rotate(40deg); }
.palette footer { display: flex; justify-content: flex-end; border-top: 1px solid #c6c6c6; padding: 8px 11px 7px; }
.palette footer button { height: 20px; border: 1px solid #bbb; padding: 0 4px; font-size: 12px; color: #666; }

/* Timeline */
.timeline { height: 41px; display: flex; align-items: flex-end; padding: 0 13px 0 10px; }
.player { display: flex; gap: 11px; height: 34px; align-items: center; fill: #444; }
.player svg { width: 14px; height: 16px; }
.features { width: 100px; height: 32px; margin-left: 20px; }
.settings { margin: 0 0 10px auto; }

/* Taskbar */
.taskbar { height: 40px; display: flex; background: #212c49; color: #fff; font: 12px/18px "Open Sans", "Noto Sans", sans-serif; }
.start { width: 48px; justify-content: center; }
.search { width: 344px; display: flex; align-items: center; gap: 10px; padding-left: 12px; background: #f0f0f0; border: 1px solid #bbb; }
.search svg { width: 18px; height: 18px; }
.search input { flex: 1; border: 0; padding: 0; background: none; outline: 0; font: 14px/20px "Open Sans", "Noto Sans", sans-serif; }
.search input::placeholder { color: #333; opacity: 1; }
.system, .apps { display: flex; }
.system { margin-right: 3px; }
.system button, .apps button { width: 48px; justify-content: center; }
.system svg, .apps svg { width: 24px; height: 24px; }
.apps { gap: 1px; }
.apps .on { background: linear-gradient(#a5bdf5, #a5bdf5) center bottom / 40px 2px no-repeat; }
.apps .current { background: linear-gradient(#a5bdf5, #a5bdf5) center bottom / 100% 2px no-repeat #4f596f; }
.tray { margin-left: auto; display: flex; align-items: center; gap: 8px; padding-right: 3px; border-right: 1px solid #78809a; margin-right: 5px; }
.clock { display: flex; flex-direction: column; align-items: center; font-size: 11px; margin: 0 10px 0 5px; }
.notes { position: relative; padding-right: 12px; }
.notes svg { width: 20px; height: 20px; }
.badge { position: absolute; right: 4px; bottom: -7px; width: 17px; height: 17px; border: 1px solid #999; border-radius: 50%; background: #333d55; font-size: 11px; line-height: 15px; text-align: center; }
```
